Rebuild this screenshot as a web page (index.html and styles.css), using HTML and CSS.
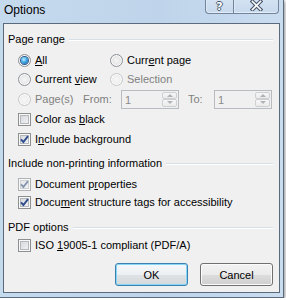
FILE: index.html
```html
<!DOCTYPE html>
<html>
<head>
<meta charset="utf-8">
<title>Options</title>
<link rel="stylesheet" href="styles.css">
</head>
<body>
<div class="window">
  <div class="titlebar">
    <span class="title">Options</span>
    <div class="caption-btns">
      <span class="cap help">?</span>
      <span class="cap close"><svg width="13" height="11" viewBox="0 0 13 11"><path d="M2.5 1.5 L10.5 9.5 M10.5 1.5 L2.5 9.5" stroke="#46556a" stroke-width="3.8" stroke-linecap="square"/><path d="M2.5 1.5 L10.5 9.5 M10.5 1.5 L2.5 9.5" stroke="#ffffff" stroke-width="1.7" stroke-linecap="square"/></svg></span>
    </div>
  </div>
  <div class="client">
    <div class="group-head"><span>Page range</span><i class="rule"></i></div>
    <div class="row h20 mt4">
      <label class="opt col1"><span class="rb on"></span><span><u>A</u>ll</span></label>
      <label class="opt"><span class="rb"></span><span>Curr<u>e</u>nt page</span></label>
    </div>
    <div class="row h19">
      <label class="opt col1"><span class="rb"></span><span>Current <u>v</u>iew</span></label>
      <label class="opt dis"><span class="rb off"></span><span>Selection</span></label>
    </div>
    <div class="row h20">
      <label class="opt dis pages"><span class="rb off"></span><span>Page(s)</span></label>
      <span class="dis from">From:</span>
      <span class="spin"><span class="spin-val">1</span><span class="spin-btns"><i class="sb up"></i><i class="sb down"></i></span></span>
      <span class="dis to">To:</span>
      <span class="spin"><span class="spin-val">1</span><span class="spin-btns"><i class="sb up"></i><i class="sb down"></i></span></span>
    </div>
    <div class="row h20">
      <label class="opt"><span class="cb"></span><span>Color as <u>b</u>lack</span></label>
    </div>
    <div class="row h20">
      <label class="opt"><span class="cb"><svg width="11" height="11" viewBox="0 0 11 11"><path d="M2 5.3 L4.4 8 L9 2.2" fill="none" stroke="#2e4c8c" stroke-width="1.9"/></svg></span><span>I<u>n</u>clude background</span></label>
    </div>
    <div class="group-head mt7"><span>Include non-printing information</span><i class="rule"></i></div>
    <div class="row h18 mt5">
      <label class="opt"><span class="cb dcb"><svg width="11" height="11" viewBox="0 0 11 11"><path d="M2 5.3 L4.4 8 L9 2.2" fill="none" stroke="#8797b0" stroke-width="1.9"/></svg></span><span>Document p<u>r</u>operties</span></label>
    </div>
    <div class="row h18">
      <label class="opt"><span class="cb"><svg width="11" height="11" viewBox="0 0 11 11"><path d="M2 5.3 L4.4 8 L9 2.2" fill="none" stroke="#2e4c8c" stroke-width="1.9"/></svg></span><span>Docu<u>m</u>ent structure tags for accessibility</span></label>
    </div>
    <div class="group-head mt9"><span>PDF options</span><i class="rule"></i></div>
    <div class="row h19 mt2">
      <label class="opt"><span class="cb"></span><span>ISO <u>1</u>9005-1 compliant (PDF/A)</span></label>
    </div>
    <div class="buttons">
      <button class="btn default">OK</button>
      <button class="btn">Cancel</button>
    </div>
  </div>
</div>
</body>
</html>
```
FILE: styles.css
```css
body {
  margin: 0;
  background: #ffffff;
  font-family: "Liberation Sans", Arial, sans-serif;
  font-size: 11px;
  color: #000;
}
.window {
  width: 283px;
  height: 297px;
  background: linear-gradient(90deg, #c6daee, #bfd4ea 55%, #c9dcf0);
  border-right: 1px solid #5a6b80;
  border-bottom: 1px solid #5a6b80;
  box-shadow: 1px 1px 3px rgba(0, 0, 0, 0.45);
  display: flex;
  flex-direction: column;
}
.titlebar {
  height: 23px;
  display: flex;
  align-items: flex-start;
  flex: none;
}
.title {
  font-size: 12px;
  line-height: 14px;
  padding: 3px 0 0 4px;
}
.caption-btns {
  margin-left: auto;
  margin-right: 4px;
  display: flex;
  height: 14px;
}
.cap {
  height: 14px;
  box-sizing: border-box;
  border: 1px solid #72839a;
  border-top: none;
  display: flex;
  justify-content: center;
  align-items: flex-start;
  background: linear-gradient(#d3e2f2, #c7d9ed);
  box-shadow: inset 0 -1px 0 #e4edf7, inset 1px 0 0 #dde8f4;
}
.help {
  width: 28px;
  border-right: none;
  border-bottom-left-radius: 4px;
  font: bold 11px/12px "DejaVu Sans", sans-serif;
  color: #fff;
  text-shadow: 1px 0 0 #4a586b, -1px 0 0 #4a586b, 0 1px 0 #4a586b, 0 -1px 0 #4a586b;
  padding-top: 1px;
}
.close {
  width: 46px;
  border-bottom-right-radius: 4px;
}
.close svg {
  display: block;
  margin-top: 0;
}
.client {
  margin: 0 3px;
  border: 1px solid #5b6a7c;
  background: #f0f0f0;
  padding: 8px 6px 6px 4px;
}
.group-head {
  display: flex;
  align-items: center;
  height: 14px;
  line-height: 13px;
}
.rule {
  flex: 1;
  height: 1px;
  margin-left: 4px;
  background: #d5dfe5;
  box-shadow: 0 1px 0 #ffffff;
}
.row {
  display: flex;
  align-items: center;
  padding-left: 10px;
  line-height: 13px;
}
.h18 { height: 18px; }
.h19 { height: 19px; }
.h20 { height: 20px; }
.mt2 { margin-top: 2px; }
.mt4 { margin-top: 4px; }
.mt5 { margin-top: 5px; }
.mt7 { margin-top: 7px; }
.mt9 { margin-top: 9px; }
.opt {
  display: flex;
  align-items: center;
  gap: 4px;
}
.col1 { width: 92px; flex: none; }
.pages { width: 65px; flex: none; }
.from { width: 38px; flex: none; }
.to { width: 26px; flex: none; margin-left: 9px; }
.dis { color: #808080; }
.rb {
  width: 13px;
  height: 13px;
  box-sizing: border-box;
  border-radius: 50%;
  border: 1px solid #8d9196;
  background: radial-gradient(circle at 50% 50%, #f6f6f6 0, #e6e6e6 55%, #cdd0d3 100%);
  box-shadow: inset 0 0 0 1px #fbfbfb;
  display: flex;
  align-items: center;
  justify-content: center;
  flex: none;
}
.rb.on::after {
  content: "";
  width: 7px;
  height: 7px;
  border-radius: 50%;
  background: radial-gradient(circle at 40% 35%, #c4efff 0, #4ab2ec 40%, #1a5eac 85%);
  box-shadow: 0 0 0 1px #2d5b90;
}
.rb.off {
  border-color: #c5c8cb;
  background: radial-gradient(circle, #f7f7f7 0, #ececec 70%, #e2e3e4 100%);
}
.cb {
  width: 13px;
  height: 13px;
  box-sizing: border-box;
  border: 1px solid #8e8f8f;
  background: linear-gradient(135deg, #d0d3d8, #f7f7f7);
  box-shadow: inset 0 0 0 1px #f8f8f8, inset 0 0 0 2px #b3b8bd;
  flex: none;
}
.cb svg { display: block; }
.cb.dcb {
  border-color: #b1b2b3;
  background: linear-gradient(135deg, #e2e4e6, #f7f7f7);
  box-shadow: inset 0 0 0 1px #f8f8f8, inset 0 0 0 2px #cfd2d5;
}
.spin {
  width: 58px;
  height: 19px;
  box-sizing: border-box;
  border: 1px solid #b8bbbf;
  background: #f0f0f0;
  display: flex;
  flex: none;
}
.spin-val {
  flex: 1;
  padding: 3px 0 0 3px;
  color: #8a8a8a;
}
.spin-btns {
  width: 15px;
  display: flex;
  flex-direction: column;
  padding: 1px 1px 1px 0;
}
.sb {
  flex: 1;
  border: 1px solid #cdd0d3;
  border-radius: 2px;
  background: linear-gradient(#f7f7f7, #eaeaea);
  display: flex;
  align-items: center;
  justify-content: center;
}
.sb::after {
  content: "";
  border-left: 3px solid transparent;
  border-right: 3px solid transparent;
}
.up::after { border-bottom: 3px solid #b0b3b6; }
.down::after { border-top: 3px solid #b0b3b6; }
.buttons {
  display: flex;
  justify-content: flex-end;
  gap: 12px;
  margin-top: 8px;
}
.btn {
  width: 73px;
  height: 23px;
  box-sizing: border-box;
  border: 1px solid #707070;
  border-radius: 3px;
  background: linear-gradient(#f2f2f2 0%, #ebebeb 50%, #dddddd 50%, #cfcfcf 100%);
  box-shadow: inset 0 0 0 1px #fbfbfb;
  font-family: "Liberation Sans", Arial, sans-serif;
  font-size: 11px;
  color: #000;
  padding: 0;
}
.btn.default {
  border-color: #3c7fb1;
  background: linear-gradient(#f5f8fa 0%, #edf0f2 50%, #e0e3e5 50%, #d4d8db 100%);
  box-shadow: inset 0 0 0 1px #86d6f5;
}
```
